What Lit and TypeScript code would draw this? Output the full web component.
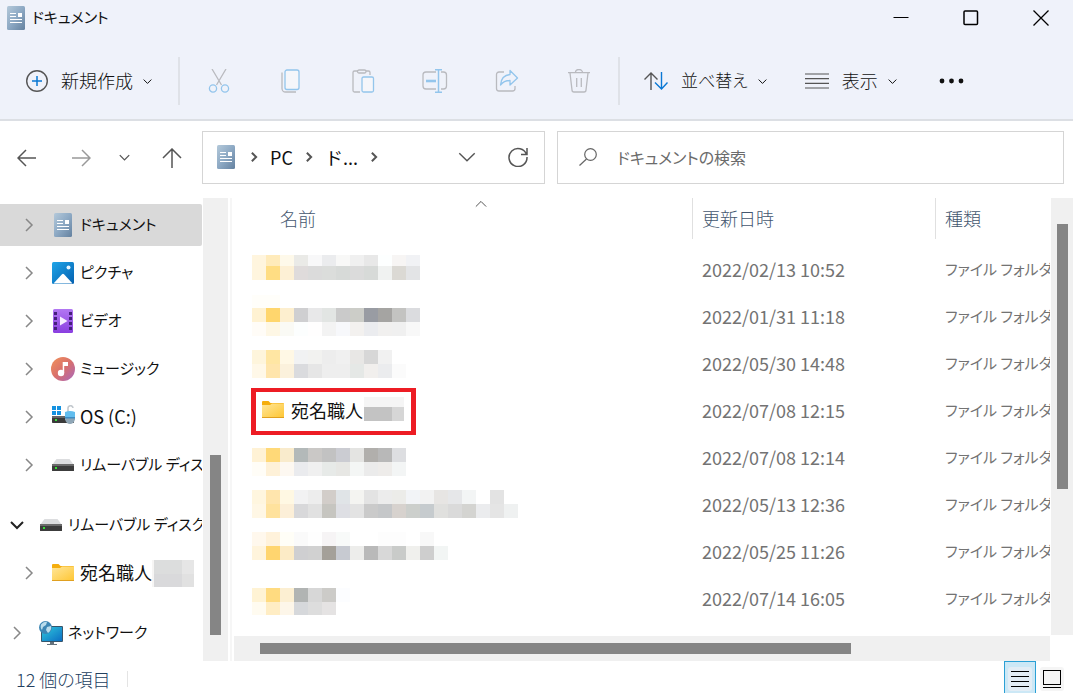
import { LitElement, html, svg, css, nothing } from "lit";
import { customElement } from "lit/decorators.js";

type Band = { y: number; h: number; cells: string[] };
type Row = { date: string; bands?: Band[]; name?: string };

const KIND = "ファイル フォルダー";

const band = (y: number, h: number, colors: string): Band => ({ y, h, cells: colors.split(" ") });

/* Rows of the list; a row without a name is covered by a mosaic ("-" leaves a cell clear). */
const ROWS: Row[] = [
  {
    date: "2022/02/13 10:52",
    bands: [
      band(8, 11, "fff5de ffebbb fef9ea eaeae7 f8f8f9 ebecee f8f8f7 f0f0f0 e8e8e8 fdffff f7f5f4 f1f2f5"),
      band(19, 14, "fff5de ffdd83 fdf0d5 dfdbdb dbdbdb dbdddb d7dad8 dbdbdb d7dad8 f0f2f1 dbd9d4 e3e4e6"),
    ],
  },
  {
    date: "2022/01/31 11:18",
    bands: [
      band(1, 13, "fffefa fffefa"),
      band(14, 14, "fff2d2 ffd66d fdefcf cfcfd1 e8e8e9 e2e5e3 cacaca cccdc8 999ca3 a5a4a2 c3c3c1 dbdcdf"),
      band(28, 14, "fffcf7 fef7e5 fafaf5 fcfefe fffefe f3f3f3 f7f8fb f3f1ef ebecef f1f0ef f0f0f0 f8f8f8"),
    ],
  },
  {
    date: "2022/05/30 14:48",
    bands: [
      band(9, 14, "fef5dc ffe6a3 fff8e5 f1f2f3 f2f2f0 ededed f0f0f0 e8e7e5 d7d7d7 f1f1f1"),
      band(23, 14, "fff8e8 ffe5ac fbf1dc dadbde e6e6e6 eeeeee eeeeee e5e8e6 f1efed ebecee fbfbfb"),
    ],
  },
  { date: "2022/07/08 12:15", name: "宛名職人" },
  {
    date: "2022/07/08 12:14",
    bands: [
      band(13, 14, "fff2d5 ffd978 f9ebcc b3b9b9 cac8c6 c2c2c2 cbccd2 e4e4e2 b1afac b8b8b8 dddee1"),
      band(27, 14, "fffdf7 fef1d8 fdf8f1 eaebee f0f0f0 e7eae8 e7e7e4 f4f6f5 ebebeb eeecea f3f5f5"),
    ],
  },
  {
    date: "2022/05/13 12:36",
    bands: [
      band(8, 14, "fff6df ffe5ad fff8e3 f2f2f3 ededed d2cdc9 e0e4e7 f4f4f1 e3e3e3 ececec ecece9 f2f4f7 f2f2f2 e7e5e3 e6e7e9 f3f5f5 - e3e3e3"),
      band(22, 14, "fff7e5 ffe29d fcefd8 d8d8da e1e1e1 c6c5c0 dedfe4 e3e3e3 cacaca c5c7c9 d7d2ce cccfcc c6cbce e0e0de dadada d4d4d1 ebecee e5e5e5 eff1f1"),
    ],
  },
  {
    date: "2022/05/25 11:26",
    bands: [
      band(3, 14, "fff8ed fff2db fffef7 fafafa fefefe f6f4f5 f8faf9 - - fdfdfd fdfdfd - f8f8f8"),
      band(17, 14, "fff4dc ffd56f fcebc6 cfcfd1 d1d1d1 a4a099 c7cad1 ededeb b9b9b9 d8d8d8 c9cbc9 f0f0ed cecece f2f5f4"),
    ],
  },
  {
    date: "2022/07/14 16:05",
    bands: [
      band(12, 14, "fff3d4 ffdb80 fcefd2 b1b4b3 d7d7d7 cccbc8 fcfdff"),
      band(26, 13, "fffbf0 ffedc4 fdf6e9 d6d8db dddddd e5e3e3"),
    ],
  },
];

const documentIcon = html`<svg class="doc" width="24" height="24" viewBox="0 0 24 24" aria-hidden="true">
  <defs><linearGradient id="dg" x1="0" y1="0" x2="1" y2="1"><stop offset="0" stop-color="#b4c9da" /><stop offset=".5" stop-color="#8da9c4" /><stop offset="1" stop-color="#64819f" /></linearGradient></defs>
  <rect x="3" width="18" height="24" rx="1.5" fill="url(#dg)" />
  <path d="M6 7.5h6M6 10.5h6M6 13.5h12M6 16.5h12" stroke="#fff" stroke-width="1.2" />
  <rect x="14" y="7" width="4" height="4" fill="#fff" />
</svg>`;

const pictureIcon = html`<svg width="24" height="24" viewBox="0 0 24 24" aria-hidden="true">
  <defs><linearGradient id="pg" x1="0" y1="0" x2="1" y2="1"><stop offset="0" stop-color="#1fa5e8" /><stop offset="1" stop-color="#0460b0" /></linearGradient></defs>
  <rect x="1" y="1" width="22" height="22" rx="1.5" fill="url(#pg)" />
  <path d="M2.5 22.5 11 13.2q1-.9 2 0l8.500 9.300z" fill="#fff" /><circle cx="17.500" cy="6.500" r="2" fill="#e6f6ff" />
</svg>`;

const videoIcon = html`<svg width="24" height="24" viewBox="0 0 24 24" aria-hidden="true">
  <defs><linearGradient id="vg" x1="0" y1="0" x2="0" y2="1"><stop offset="0" stop-color="#b277f2" /><stop offset="1" stop-color="#8a3ee0" /></linearGradient></defs>
  <rect x="2" width="20" height="24" rx="1.500" fill="url(#vg)" />
  <path d="M4.500 3v18M19.500 3v18" stroke="#45207c" stroke-width="3" stroke-dasharray="3 2" />
  <path d="M9 7.500v9l7.500-4.500z" fill="#f6edff" />
</svg>`;

const musicIcon = html`<svg width="24" height="24" viewBox="0 0 24 24" aria-hidden="true">
  <defs><linearGradient id="mg" x1="0" y1="0" x2="1" y2="1"><stop offset="0" stop-color="#f2935a" /><stop offset=".5" stop-color="#d9706c" /><stop offset="1" stop-color="#a868c0" /></linearGradient></defs>
  <circle cx="12" cy="12" r="12" fill="url(#mg)" />
  <circle cx="10" cy="16" r="3.200" fill="#fff" /><path d="M11.700 16V5h5.300v4h-3.800v7z" fill="#fff" />
</svg>`;

const osIcon = html`<svg width="24" height="24" viewBox="0 0 24 24" aria-hidden="true">
  <path d="M1 1h4v4H1zM6 1h4v4H6zM1 6h4v4H1zM6 6h4v4H6z" fill="#1592e0" />
  <rect x="1" y="11" width="22" height="7" rx=".8" fill="#3a3a3a" /><rect x="1" y="11" width="22" height="2" fill="#666" />
  <rect x="4" y="14" width="2" height="2" fill="#3ee03e" />
  <path d="M17 7V3.500a2.500 2.500 0 0 1 5-.5" fill="none" stroke="#c3c9ce" stroke-width="1.600" />
  <path d="M14 7q5-2 10 0v5H14z" fill="#62bdee" /><path d="M14 12h10v2.500q-1.500 4.500-5 4.500t-5-4.500z" fill="#8fa6b6" /><path d="M14 12h10v1.500H14z" fill="#3d8cc4" />
</svg>`;

const driveIcon = html`<svg width="24" height="24" viewBox="0 0 24 24" aria-hidden="true">
  <path d="M5.500 6h13l4.500 6H1z" fill="#dcdddf" />
  <rect x="1" y="11" width="22" height="7" rx=".6" fill="#3c3c3c" /><rect x="1" y="11" width="22" height="2" fill="#6b6b6b" />
  <rect x="4" y="14" width="2" height="2" fill="#35e035" />
</svg>`;

const folderIcon = html`<svg width="24" height="24" viewBox="0 0 24 24" aria-hidden="true">
  <defs><linearGradient id="fg" x1="0" y1="0" x2="1" y2="1"><stop offset="0" stop-color="#ffe69a" /><stop offset="1" stop-color="#fec736" /></linearGradient></defs>
  <path d="M1 4a1 1 0 0 1 1-1h5.500l2 2H22a1 1 0 0 1 1 1v3H1z" fill="#f5ae0e" />
  <path d="M1 7h8l2-1.500h12V19H1z" fill="url(#fg)" /><path d="M1 19h22v1H1z" fill="#e0a020" />
</svg>`;

const networkIcon = html`<svg width="24" height="24" viewBox="0 0 24 24" aria-hidden="true">
  <defs><linearGradient id="ng" x1="0" y1="0" x2="1" y2="1"><stop offset="0" stop-color="#2fc8dc" /><stop offset="1" stop-color="#0c6fc4" /></linearGradient></defs>
  <rect x="2" y="5" width="22" height="16" rx="1" fill="#38566c" /><rect x="3" y="6" width="20" height="14" fill="url(#ng)" />
  <path d="M11 21h4v2h-4zM8 23h10v1H8z" fill="#65737d" />
  <circle cx="6.500" cy="6.500" r="6.500" fill="#3c86b4" /><path d="M2 3.500Q5 0 8 1l-1 3-3 2-1 3q-2-2-1-5.500zM8 6l4-1q1 4-3 7l-2-3z" fill="#b9dcec" />
</svg>`;

const chevron = (dir: "right" | "down" | "up", size: number, width = 1) => {
  const d = { right: "M4 1l6 6-6 6", down: "M1 4l6 6 6-6", up: "M1 10l6-6 6 6" }[dir];
  return html`<svg width=${size} height=${size} viewBox="0 0 14 14" fill="none" stroke="currentColor" stroke-width=${(width * 14) / size} aria-hidden="true"><path d=${d} /></svg>`;
};

const icon = (w: number, h: number, body: unknown) =>
  html`<svg width=${w} height=${h} viewBox="0 0 ${w} ${h}" fill="none" stroke="currentColor" aria-hidden="true">${body}</svg>`;

const TREE = [
  { label: "ドキュメント", icon: documentIcon, level: 1, selected: true },
  { label: "ピクチャ", icon: pictureIcon, level: 1 },
  { label: "ビデオ", icon: videoIcon, level: 1 },
  { label: "ミュージック", icon: musicIcon, level: 1 },
  { label: "OS (C:)", icon: osIcon, level: 1 },
  { label: "リムーバブル ディスク", icon: driveIcon, level: 1 },
  { label: "リムーバブル ディスク", icon: driveIcon, level: 0, open: true, section: true },
  { label: "宛名職人", icon: folderIcon, level: 1, masked: true },
  { label: "ネットワーク", icon: networkIcon, level: 0, section: true },
];

const GREY = "#b9babf";
const BLUE = "#93c5ec";
const FILE_ACTIONS = [
  {
    label: "切り取り",
    art: icon(24, 24, svg`<g stroke-width="1.300"><path d="M5 0l9.500 16M19 0L9.500 16" stroke=${GREY} /><circle cx="6" cy="19.500" r="3.600" stroke=${BLUE} /><circle cx="18" cy="19.500" r="3.600" stroke=${BLUE} /></g>`),
  },
  {
    label: "コピー",
    art: icon(24, 24, svg`<g stroke-width="1.300"><path d="M3 3.500v16a3.500 3.500 0 0 0 3.500 3.500H17" stroke=${GREY} /><rect x="6" y="1" width="14" height="19.500" rx="2" stroke=${BLUE} fill="#f5f6fa" /></g>`),
  },
  {
    label: "貼り付け",
    art: icon(24, 24, svg`<g stroke-width="1.300"><path d="M7 2H3.500A1.500 1.500 0 0 0 2 3.500v18A1.500 1.500 0 0 0 3.500 23H9M15 2h2.500A1.500 1.500 0 0 1 19 3.500V6" stroke=${GREY} /><rect x="6.500" y="1" width="8.500" height="3" rx="1.500" stroke=${GREY} /><rect x="11" y="8" width="11.500" height="15" rx="1.500" stroke=${BLUE} fill="#f5f6fa" /></g>`),
  },
  {
    label: "名前の変更",
    art: icon(26, 24, svg`<g stroke-width="1.300"><path d="M14 3H4a3 3 0 0 0-3 3v11a3 3 0 0 0 3 3h10M19 3h2.500a3 3 0 0 1 3 3v11a3 3 0 0 1-3 3H19" stroke=${GREY} /><path d="M13 .8h7M13 23.200h7M16.500 1v22" stroke=${BLUE} stroke-width="1.500" /><path d="M4 12h10" stroke=${BLUE} stroke-width="2.600" /></g>`),
  },
  {
    label: "共有",
    art: icon(24, 24, svg`<g stroke-width="1.300"><path d="M9 3H4a2.500 2.500 0 0 0-2.500 2.500v14A2.500 2.500 0 0 0 4 22h13.500a2.500 2.500 0 0 0 2.500-2.500V17" stroke=${GREY} /><path d="M15 1.500 22.500 9 15 16v-4.500c-4 0-7 1-9.500 4.500C6 10 9 6 15 5.500z" stroke=${BLUE} stroke-linejoin="round" /></g>`),
  },
  {
    label: "削除",
    art: icon(24, 24, svg`<g stroke-width="1.300" stroke=${GREY}><path d="M1 3.700h22M8.500 3.500a3.500 3 0 0 1 7 0M3 4l2 17a2 2 0 0 0 2 2h10a2 2 0 0 0 2-2l2-17" /><path d="M9.700 9v9M14.300 9v9" /></g>`),
  },
];

const mosaic = (width: number, height: number, bands: Band[]) => html`<svg class="mosaic" width=${width} height=${height} shape-rendering="crispEdges" aria-hidden="true">
  ${bands.map((b) => b.cells.map((c, i) => (c === "-" ? nothing : svg`<rect x=${i * 14} y=${b.y} width="14" height=${b.h} fill="#${c}" />`)))}
</svg>`;

@customElement("app-root")
export class AppRoot extends LitElement {
  static styles = css`
    :host {
      display: flex;
      flex-direction: column;
      min-height: 100vh;
      background: #fff;
      color: #111;
      font: 18px/24px "Noto Sans CJK JP", "Noto Sans", sans-serif;
    }
    * { box-sizing: border-box; }
    svg { display: block; flex: none; }
    button, a, input {
      font: inherit;
      color: inherit;
      background: none;
      border: 0;
      padding: 0;
      margin: 0;
      text-decoration: none;
    }
    button { display: flex; align-items: center; justify-content: center; white-space: nowrap; }
    .kana { font-size: 15px; font-feature-settings: "palt"; }

    .top { background: #eff2fa; border-bottom: 2px solid #dcdfe4; }
    .titlebar { display: flex; align-items: center; height: 35px; padding-left: 4px; }
    .title { flex: 1; margin: 0 0 0 4px; padding-bottom: 2px; font-weight: 400; }
    .window-buttons { display: flex; gap: 6px; }
    .window-buttons button { width: 64px; height: 35px; }
    .toolbar { display: flex; align-items: center; height: 76px; margin-top: 8px; padding-left: 26px; font-weight: 300; font-feature-settings: "palt"; }
    .menu { gap: 10px; color: #111; }
    .menu .text { margin-left: 3px; padding-bottom: 2px; }
    .menu .art { color: #555; }
    .rule { width: 2px; height: 48px; background: #dfe2e8; }
    .new { margin-right: 26px; }
    .actions { display: flex; margin: 0 3px; }
    .actions button { width: 72px; height: 48px; }
    .sort { margin-left: 24px; font-size: 17px; }
    .view { margin-left: 38px; }
    .more { margin-left: 42px; }

    .location { display: flex; align-items: center; padding: 10px 9px 13px 0; }
    .history { display: flex; flex: none; color: #555; }
    .history button { height: 53px; }
    .back { width: 54px; }
    .forward { width: 53px; color: #999; }
    .recent { width: 35px; }
    .up { width: 60px; }
    .address, .search {
      display: flex;
      align-items: center;
      height: 53px;
      padding-bottom: 2px;
      border: 1px solid #d5d5d5;
      min-width: 0;
    }
    .address { flex: 0 1 343px; padding-left: 11px; padding-right: 16px; color: #555; }
    .crumbs { display: flex; align-items: center; flex: 1; gap: 11px; }
    .crumbs a { color: #111; }
    .address-buttons { display: flex; gap: 32px; }
    .search { flex: 1; margin-left: 12px; padding-left: 21px; gap: 20px; color: #666; }
    .search input { flex: 1; min-width: 0; outline: 0; font-size: 16px; font-feature-settings: "palt"; }
    .search input::placeholder { color: #6b6b6b; opacity: 1; }

    .main { display: flex; flex: 1; padding-top: 1px; }
    .tree { width: 202px; flex: none; overflow: hidden; padding: 6px 0 7px; }
    .tree ul { list-style: none; margin: 0; padding: 0; display: flex; flex-direction: column; gap: 6px; }
    .node { display: flex; align-items: center; height: 42px; padding-left: 7px; white-space: nowrap; }
    .node.child { padding-left: 19px; }
    .node.section { margin-top: 12px; }
    .node.selected { background: #d9d9d9; border-radius: 0 2px 2px 0; }
    .node button { flex: none; width: 20px; height: 24px; margin-right: 12px; color: #888; }
    .node button.open { color: #222; }
    .node a { display: flex; align-items: center; gap: 5px; flex: none; }
    .node a span { padding-bottom: 2px; }
    .vbar { display: flex; flex-direction: column; align-items: center; background: #f0f0f0; }
    .tree-bar { width: 25px; margin-left: 1px; flex: none; }
    .thumb { background: #858585; }
    .vbar .thumb { width: 11px; }
    .tree-bar .before { flex: 257; }
    .tree-bar .thumb { flex: 180; }
    .tree-bar .after { flex: 26; }
    .splitter { flex: none; width: 2px; margin: 0 2px; background: #f6f6f6; }

    .list { flex: 1; min-width: 0; display: grid; grid-template-columns: minmax(0, 1fr) 22px; grid-template-rows: 1fr 25px; column-gap: 1px; row-gap: 1px; }
    .scroller { overflow: hidden; }
    table { width: 100%; table-layout: fixed; border-collapse: collapse; }
    th, td { padding: 0; text-align: left; font-weight: 400; white-space: nowrap; overflow: hidden; }
    .col-date { width: 243px; }
    .col-kind { width: 115px; }
    th { vertical-align: top; height: 49px; color: #44576f; font-weight: 300; }
    th button { position: relative; width: 100%; height: 41px; justify-content: flex-start; padding: 0 0 2px 10px; }
    th.name { padding-left: 36px; }
    th.divided button { border-left: 1px solid #e0e0e0; padding-left: 9px; }
    .caret { position: absolute; top: 0; left: 50%; margin-left: -6px; color: #555; }
    td { height: 47px; padding: 0 0 3px 10px; color: #737373; }
    td.name { padding: 0 0 0 18px; }
    .marked { display: flex; align-items: center; width: max-content; height: 39px; margin-left: 4px; padding: 0 7px 0 5px; gap: 1px; outline: 5px solid #ed1c24; color: #111; }
    .marked a { display: flex; align-items: center; gap: 6px; padding-bottom: 3px; }
    .file-bar .before { flex: 26; }
    .file-bar .thumb { flex: 265; }
    .file-bar .after { flex: 146; }
    .hbar { display: flex; align-items: center; background: #f0f0f0; }
    .hbar .thumb { height: 11px; flex: 591; }
    .hbar .before { flex: 26; }
    .hbar .after { flex: 199; }

    .status { display: flex; align-items: center; height: 32px; padding: 0 5px 0 16px; color: #24405f; font-weight: 300; }
    .count { flex: 1; display: flex; align-items: center; gap: 16px; padding-top: 3px; font-feature-settings: "palt"; }
    .count::after { content: ""; width: 1px; height: 16px; background: #e4e4e4; }
    .layout { width: 32px; height: 32px; color: #000; padding-top: 3px; }
    .layout.on { background: #cce8f6; border: 1px solid #2ba0d5; border-bottom: 0; }
  `;

  private node(n: (typeof TREE)[number]) {
    const cls = ["node", n.level ? "child" : "", n.selected ? "selected" : "", n.section ? "section" : ""].join(" ");
    const kana = n.masked || n.label.startsWith("OS") ? "" : "kana";
    return html`<li class=${cls}>
      <button class=${n.open ? "open" : ""} aria-label=${n.open ? "折りたたむ" : "展開"}>${n.open ? chevron("down", 14, 2) : chevron("right", 14, 1.5)}</button>
      <a href="#">${n.icon}<span class=${kana}>${n.label}</span></a>
      ${n.masked
        ? html`<svg width="42" height="27" shape-rendering="crispEdges" aria-hidden="true">
            <rect width="2" height="27" fill="#f6f5f4" /><rect x="2" width="28" height="14" fill="#dcdddd" /><rect x="30" width="12" height="14" fill="#e6e6e6" />
            <rect x="2" y="14" width="28" height="13" fill="#d9d9db" /><rect x="30" y="14" width="12" height="13" fill="#e1e1e1" />
          </svg>`
        : nothing}
    </li>`;
  }

  private row(r: Row) {
    return html`<tr>
      <td class="name">
        ${r.name
          ? html`<div class="marked"><a href="#">${folderIcon}<span>${r.name}</span></a>
              <svg width="40" height="30" shape-rendering="crispEdges" aria-hidden="true">
                <rect width="40" height="10" fill="#f5f5f5" /><rect y="10" width="28" height="14" fill="#c3c3c3" /><rect x="28" y="10" width="12" height="14" fill="#d6d6d6" />
              </svg></div>`
          : mosaic(280, 47, r.bands!)}
      </td>
      <td>${r.date}</td>
      <td class="kana">${KIND}</td>
    </tr>`;
  }

  render() {
    return html`
      <header class="top">
        <div class="titlebar">
          ${documentIcon}
          <h1 class="title kana">ドキュメント</h1>
          <div class="window-buttons">
            <button aria-label="最小化">${icon(16, 16, svg`<path d="M.5 7.500h15" stroke="#000" />`)}</button>
            <button aria-label="最大化">${icon(16, 16, svg`<rect x="1" y="1" width="13.500" height="13.500" rx="1" stroke="#000" stroke-width="1.500" />`)}</button>
            <button aria-label="閉じる">${icon(16, 16, svg`<path d="M.5.5l15 15M15.500.5l-15 15" stroke="#000" stroke-width="1.300" />`)}</button>
          </div>
        </div>
        <div class="toolbar" role="toolbar">
          <button class="menu new">
            <span class="art">${icon(22, 22, svg`<circle cx="11" cy="11" r="10.300" stroke-width="1.400" /><path d="M11 6v10M6 11h10" stroke="#0a78d4" stroke-width="1.500" />`)}</span>
            <span class="text">新規作成</span>${chevron("down", 9)}
          </button>
          <span class="rule"></span>
          <div class="actions">${FILE_ACTIONS.map((a) => html`<button aria-label=${a.label} disabled>${a.art}</button>`)}</div>
          <span class="rule"></span>
          <button class="menu sort">
            <span class="art">${icon(24, 18, svg`<g stroke-width="1.400"><path d="M7 18V1M.5 7.500 7 1l6.500 6.500" /><path d="M17.500 0v17M11 10.500l6.500 6.500 6-6.500" stroke="#0a78d4" /></g>`)}</span>
            <span class="text">並べ替え</span>${chevron("down", 9)}
          </button>
          <button class="menu view">
            <span class="art">${icon(24, 16, svg`<path d="M0 1h24M0 5.700h24M0 10.300h24M0 15h24" stroke-width="1.200" />`)}</span>
            <span class="text">表示</span>${chevron("down", 9)}
          </button>
          <button class="more" aria-label="もっと見る">${icon(26, 6, svg`<g fill="#111" stroke="none"><circle cx="3" cy="3" r="2.400" /><circle cx="12.500" cy="3" r="2.400" /><circle cx="22" cy="3" r="2.400" /></g>`)}</button>
        </div>
      </header>

      <div class="location">
        <nav class="history" aria-label="履歴">
          <button class="back" aria-label="戻る">${icon(20, 18, svg`<path d="M19 9H1.500M9 1 1 9l8 8" stroke-width="1.500" />`)}</button>
          <button class="forward" aria-label="進む">${icon(20, 18, svg`<path d="M1 9h17.500M11 1l8 8-8 8" stroke-width="1.500" />`)}</button>
          <button class="recent" aria-label="最近表示した場所">${chevron("down", 11, 1.3)}</button>
          <button class="up" aria-label="上へ">${icon(20, 20, svg`<path d="M10 20V1.500M1 10l9-9 9 9" stroke-width="1.500" />`)}</button>
        </nav>
        <div class="address">
          <nav class="crumbs" aria-label="場所">
            ${documentIcon}${chevron("right", 10, 2)}<a href="#">PC</a>${chevron("right", 10, 2)}<a href="#">ド...</a>${chevron("right", 10, 2)}
          </nav>
          <div class="address-buttons">
            <button aria-label="以前の場所">${chevron("down", 18, 1.4)}</button>
            <button aria-label="更新">${icon(20, 20, svg`<path d="M18.500 7.500A9 9 0 1 0 19 10M19 1v6.500h-6" stroke-width="1.500" />`)}</button>
          </div>
        </div>
        <label class="search">
          ${icon(18, 18, svg`<circle cx="11.500" cy="6.500" r="5.800" stroke-width="1.200" /><path d="M7.500 11 .5 17.500" stroke-width="1.200" />`)}
          <input type="text" aria-label="検索" placeholder="ドキュメントの検索" />
        </label>
      </div>

      <div class="main">
        <nav class="tree" aria-label="フォルダー"><ul>${TREE.map((n) => this.node(n))}</ul></nav>
        <div class="vbar tree-bar"><span class="before"></span><span class="thumb"></span><span class="after"></span></div>
        <div class="splitter"></div>
        <section class="list">
          <div class="scroller">
            <table>
              <colgroup><col /><col class="col-date" /><col class="col-kind" /></colgroup>
              <thead><tr>
                <th class="name"><button>名前<span class="caret">${chevron("up", 12)}</span></button></th>
                <th class="divided"><button>更新日時</button></th>
                <th class="divided"><button>種類</button></th>
              </tr></thead>
              <tbody>${ROWS.map((r) => this.row(r))}</tbody>
            </table>
          </div>
          <div class="vbar file-bar"><span class="before"></span><span class="thumb"></span><span class="after"></span></div>
          <div class="hbar"><span class="before"></span><span class="thumb"></span><span class="after"></span></div>
        </section>
      </div>

      <footer class="status">
        <span class="count">12 個の項目</span>
        <button class="layout on" aria-label="詳細">${icon(24, 24, svg`<rect width="24" height="24" rx="3" fill="#e3edf5" stroke="none" /><path d="M3 4.500h18M3 9.500h18M3 14.500h18M3 19.500h18" />`)}</button>
        <button class="layout" aria-label="大アイコン">${icon(24, 24, svg`<rect width="24" height="24" rx="3" fill="#f5f5f5" stroke="none" /><rect x="3.500" y="3.500" width="17" height="14" /><path d="M3 20.500h18" />`)}</button>
      </footer>
    `;
  }
}
